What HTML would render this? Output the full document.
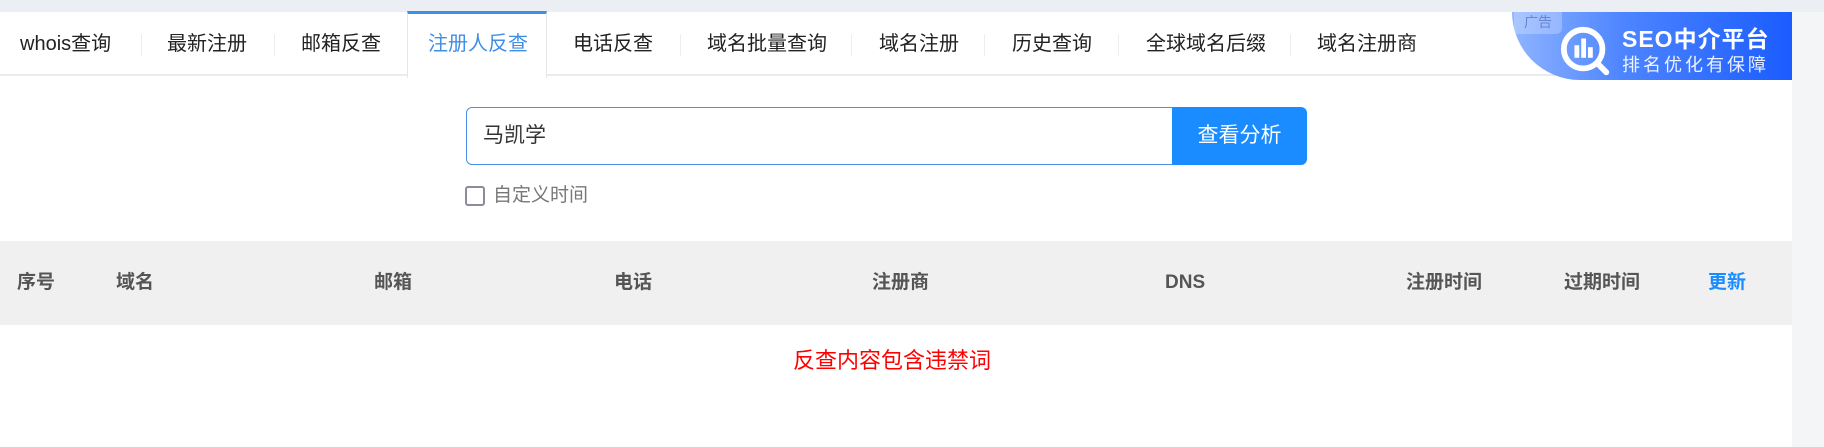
<!DOCTYPE html>
<html><head><meta charset="utf-8"><style>
*{margin:0;padding:0;box-sizing:border-box}
body{width:1824px;height:447px;overflow:hidden;background:#f4f5f7;font-family:"Liberation Sans","Noto Sans CJK SC",sans-serif;position:relative}
.top{position:absolute;left:0;top:0;width:1824px;height:12px;background:#ebeef2}
.main{position:absolute;left:0;top:12px;width:1792px;height:435px;background:#fff}
.tabs{position:absolute;left:0;top:0;width:1792px;height:64px;border-bottom:2px solid #ececec}
.t{position:absolute;top:0;height:64px;line-height:64px;font-size:20px;color:#222;white-space:nowrap}
.sep{position:absolute;top:22px;width:1px;height:22px;background:#eee}
.act{position:absolute;left:407px;top:-1px;width:140px;height:67px;background:#fff;border-top:3px solid #3f8fe6;border-left:1px solid #e6e6e6;border-right:1px solid #e6e6e6}
.ad{position:absolute;left:1512px;top:0;width:280px;height:68px;background:linear-gradient(90deg,#8fb4ff,#4d84ff 40%,#1a5cff);border-bottom-left-radius:68px 68px;overflow:hidden;color:#fff}
.inp{position:absolute;left:466px;top:95px;width:707px;height:58px;border:1px solid #4a90e2;border-radius:6px 0 0 6px;font-size:21px;line-height:56px;padding-left:16px;color:#333}
.btn{position:absolute;left:1172px;top:95px;width:135px;height:58px;background:#1a8cff;border-radius:0 6px 6px 0;color:#fff;font-size:21px;line-height:58px;text-align:center}
.cb{position:absolute;left:465px;top:174px;width:20px;height:20px;border:2px solid #8a8d99;border-radius:3px}
.cbl{position:absolute;left:493px;top:172px;font-size:19px;color:#777;line-height:24px}
.th{position:absolute;left:0;top:229px;width:1792px;height:84px;background:#f0f0f0}
.h{position:absolute;top:0;line-height:84px;font-size:19px;font-weight:bold;color:#555}
.msg{position:absolute;left:0;width:1784px;text-align:center;top:331px;font-size:22px;color:#f00}
</style></head><body>
<div class="top"></div>
<div class="main">
<div class="tabs">
<div class="act"></div>
<div class="t" style="left:20px">whois查询</div>
<div class="sep" style="left:141px"></div>
<div class="t" style="left:167px">最新注册</div>
<div class="sep" style="left:274px"></div>
<div class="t" style="left:301px">邮箱反查</div>
<div class="t" style="left:428px;color:#3f8fe6">注册人反查</div>
<div class="t" style="left:573px">电话反查</div>
<div class="sep" style="left:680px"></div>
<div class="t" style="left:707px">域名批量查询</div>
<div class="sep" style="left:851px"></div>
<div class="t" style="left:879px">域名注册</div>
<div class="sep" style="left:984px"></div>
<div class="t" style="left:1012px">历史查询</div>
<div class="sep" style="left:1118px"></div>
<div class="t" style="left:1146px">全球域名后缀</div>
<div class="sep" style="left:1290px"></div>
<div class="t" style="left:1317px">域名注册商</div>
<div class="ad">
<div style="position:absolute;left:2px;top:0;width:48px;height:22px;background:rgba(255,255,255,.25);border-radius:0 0 6px 0;font-size:14px;color:rgba(90,120,200,.8);line-height:20px;text-align:center">广告</div>
<svg style="position:absolute;left:46px;top:12px" width="58" height="56" viewBox="0 0 60 58"><circle cx="26" cy="26" r="20" fill="none" stroke="#fff" stroke-width="6"/><rect x="17" y="22" width="5" height="13" fill="#fff"/><rect x="24" y="15" width="5" height="20" fill="#fff"/><rect x="31" y="24" width="5" height="11" fill="#fff"/><line x1="41" y1="41" x2="50" y2="50" stroke="#fff" stroke-width="6" stroke-linecap="round"/></svg>
<div style="position:absolute;left:110px;top:8px;font-size:23px;font-weight:bold;letter-spacing:1px">SEO中介平台</div>
<div style="position:absolute;left:110px;top:39px;font-size:18px;letter-spacing:3px;opacity:.9">排名优化有保障</div>
</div>
</div>
<div class="inp">马凯学</div>
<div class="btn">查看分析</div>
<div class="cb"></div>
<div class="cbl">自定义时间</div>
<div class="th">
<div class="h" style="left:17px">序号</div>
<div class="h" style="left:116px">域名</div>
<div class="h" style="left:374px">邮箱</div>
<div class="h" style="left:614px">电话</div>
<div class="h" style="left:872px">注册商</div>
<div class="h" style="left:1165px">DNS</div>
<div class="h" style="left:1406px">注册时间</div>
<div class="h" style="left:1564px">过期时间</div>
<div class="h" style="left:1708px;color:#1a8cff">更新</div>
</div>
<div class="msg">反查内容包含违禁词</div>
</div>
</body></html>
